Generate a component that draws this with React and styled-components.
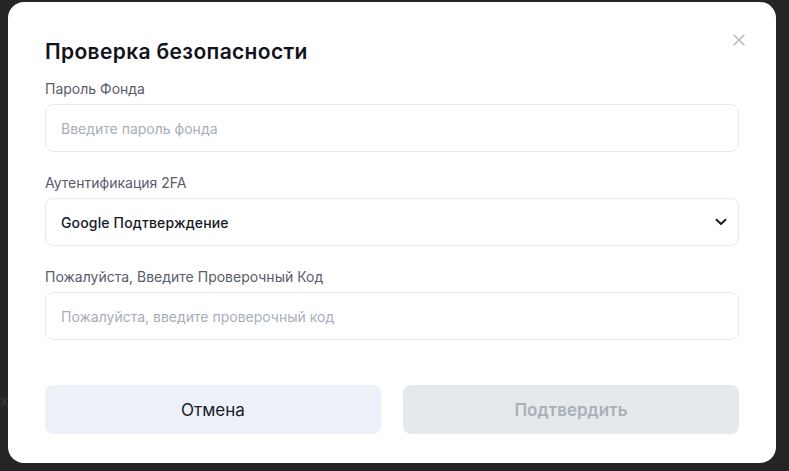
import React from "react";
import styled, { createGlobalStyle } from "styled-components";

const Global = createGlobalStyle`
  html, body { margin: 0; padding: 0; background: #252525; }
  body { font-family: Inter, "Noto Sans", sans-serif; }
  * { box-sizing: border-box; }
`;

const Backdrop = styled.div`
  position: relative;
  width: 789px;
  height: 471px;
  padding: 2px 13px 0 8px;
  background: #252525;
  overflow: hidden;
`;

const BehindText = styled.span`
  position: absolute;
  left: 0;
  top: 390px;
  font-size: 16px;
  color: #3a3a3a;
  font-family: Inter, sans-serif;
`;

const Modal = styled.div`
  position: relative;
  width: 768px;
  height: 461px;
  background: #ffffff;
  border-radius: 16px;
  padding: 36px 37px 29px 37px;
  display: flex;
  flex-direction: column;
`;

const Title = styled.h2`
  margin: 0 0 13px 0;
  font-size: 21px;
  line-height: 28px;
  font-weight: 600;
  color: #12131a;
  letter-spacing: 0.35px;
`;

const Close = styled.button`
  position: absolute;
  top: 32px;
  right: 31px;
  width: 12px;
  height: 12px;
  padding: 0;
  border: 0;
  background: none;
  display: flex;
  cursor: pointer;
`;

const Fields = styled.div`
  display: flex;
  flex-direction: column;
  gap: 21px;
`;

const Group = styled.div`
  display: flex;
  flex-direction: column;
  gap: 5px;
`;

const Label = styled.label`
  font-size: 14px;
  line-height: 20px;
  color: #585c6b;
`;

const Input = styled.input`
  height: 48px;
  width: 100%;
  border: 1px solid #e8e8f2;
  border-radius: 8px;
  padding: 0 15px;
  font-family: Inter, sans-serif;
  font-size: 14px;
  color: #1a1b24;
  outline: none;
  &::placeholder { color: #a9adb8; }
`;

const Select = styled.div`
  height: 48px;
  width: 100%;
  border: 1px solid #e8e8f2;
  border-radius: 8px;
  padding: 0 11px 0 15px;
  display: flex;
  align-items: center;
  justify-content: space-between;
  font-size: 14px;
  font-weight: 500;
  color: #16171f;
  letter-spacing: 0.15px;
`;

const Buttons = styled.div`
  margin-top: 45px;
  display: grid;
  grid-template-columns: 1fr 1fr;
  gap: 22px;
`;

const Button = styled.button`
  height: 49px;
  border: 0;
  border-radius: 8px;
  font-family: Inter, sans-serif;
  font-size: 17px;
  font-weight: ${(p) => (p.$primary ? 600 : 400)};
  background: ${(p) => (p.$primary ? "#e6e9ec" : "#edf0f9")};
  color: ${(p) => (p.$primary ? "#a9b0b8" : "#1a1c26")};
`;

export default function App() {
  return (
    <>
      <Global />
      <Backdrop>
        <BehindText>x</BehindText>
        <Modal>
          <Close aria-label="close">
            <svg width="12" height="12" viewBox="0 0 12 12">
              <path d="M1 1L11 11M11 1L1 11" stroke="#b6bac2" strokeWidth="1.6" strokeLinecap="round" />
            </svg>
          </Close>
          <Title>Проверка безопасности</Title>
          <Fields>
            <Group>
              <Label>Пароль Фонда</Label>
              <Input placeholder="Введите пароль фонда" />
            </Group>
            <Group>
              <Label>Аутентификация 2FA</Label>
              <Select>
                <span>Google Подтверждение</span>
                <svg width="12" height="8" viewBox="0 0 12 8">
                  <path d="M1.5 1.8L6 6L10.5 1.8" fill="none" stroke="#1a1b24" strokeWidth="2" strokeLinecap="round" strokeLinejoin="round" />
                </svg>
              </Select>
            </Group>
            <Group>
              <Label>Пожалуйста, Введите Проверочный Код</Label>
              <Input placeholder="Пожалуйста, введите проверочный код" />
            </Group>
          </Fields>
          <Buttons>
            <Button>Отмена</Button>
            <Button $primary>Подтвердить</Button>
          </Buttons>
        </Modal>
      </Backdrop>
    </>
  );
}
